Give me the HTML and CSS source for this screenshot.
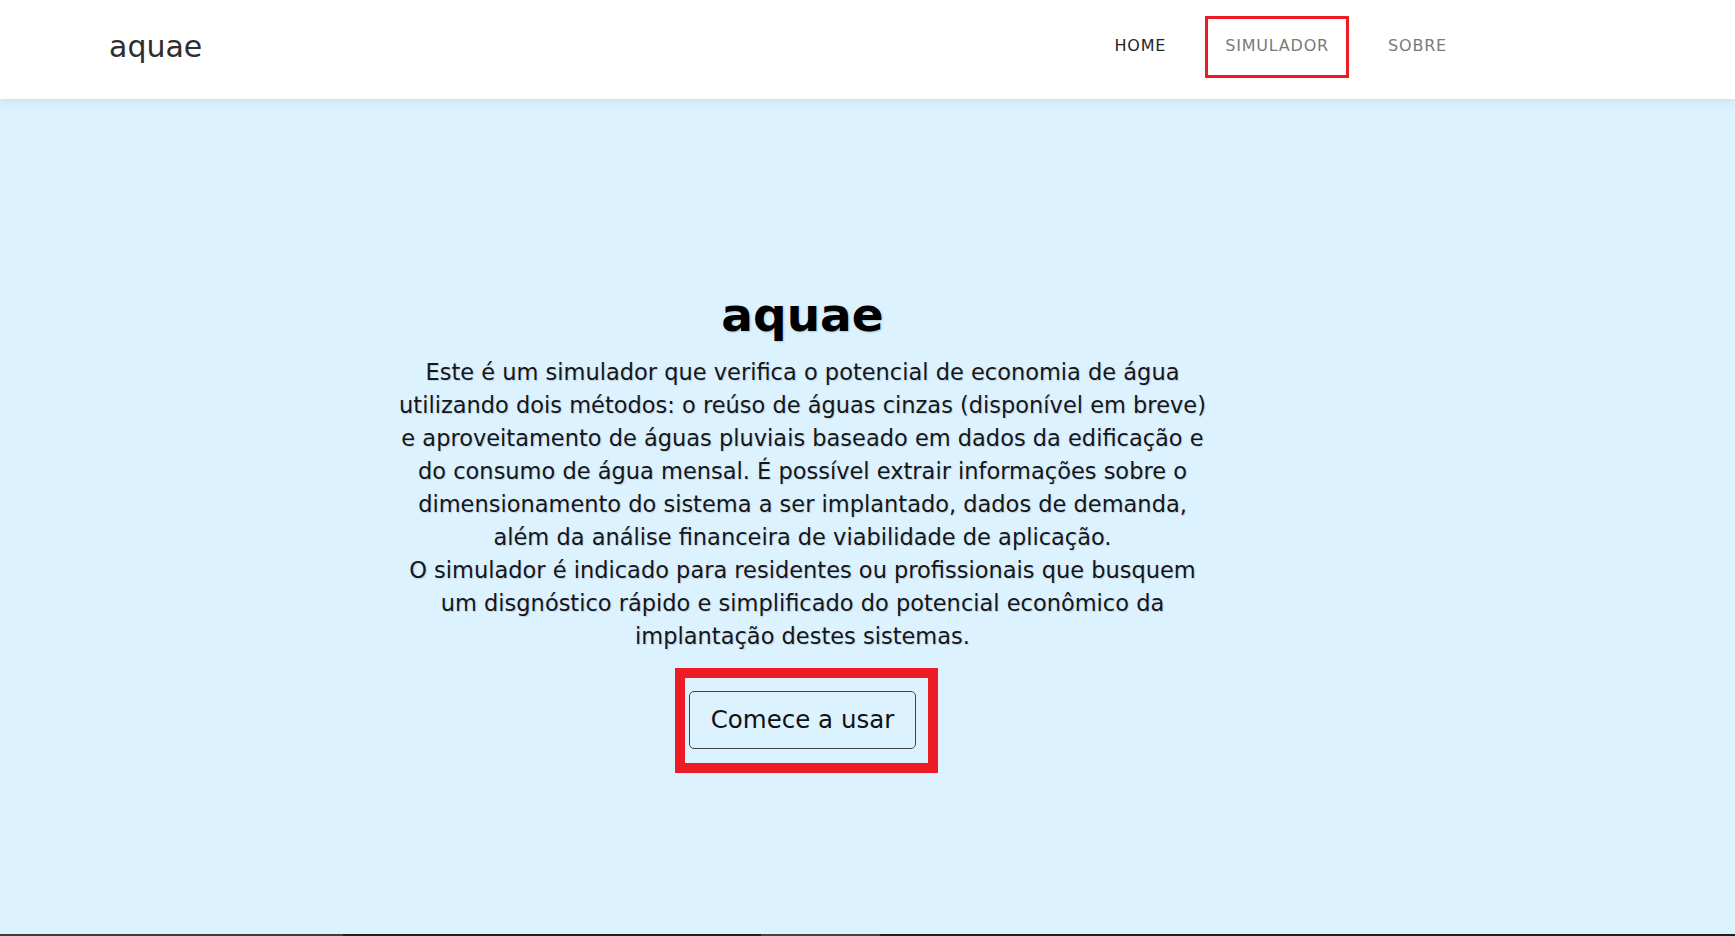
FILE: index.html
```html
<!DOCTYPE html>
<html lang="pt-BR">
<head>
<meta charset="utf-8">
<title>aquae</title>
<link rel="stylesheet" href="styles.css">
</head>
<body>
<header class="topbar">
  <a class="brand" href="#">aquae</a>
  <nav class="nav">
    <a class="nav-link nav-link-current" href="#">HOME</a>
    <a class="nav-link nav-link-marked" href="#">SIMULADOR</a>
    <a class="nav-link" href="#">SOBRE</a>
  </nav>
</header>
<main class="hero">
  <h1 class="hero-title">aquae</h1>
  <p class="hero-text">Este é um simulador que verifica o potencial de economia de água<br>utilizando dois métodos: o reúso de águas cinzas (disponível em breve)<br>e aproveitamento de águas pluviais baseado em dados da edificação e<br>do consumo de água mensal. É possível extrair informações sobre o<br>dimensionamento do sistema a ser implantado, dados de demanda,<br>além da análise financeira de viabilidade de aplicação.<br>O simulador é indicado para residentes ou profissionais que busquem<br>um disgnóstico rápido e simplificado do potencial econômico da<br>implantação destes sistemas.</p>
  <div class="cta-wrap">
    <a class="cta" href="#">Comece a usar</a>
    <span class="cta-mark"></span>
  </div>
</main>
<footer class="footer">
  <span class="footer-seg footer-seg-a"></span>
  <span class="footer-seg footer-seg-b"></span>
  <span class="footer-seg footer-seg-c"></span>
  <span class="footer-seg footer-seg-d"></span>
</footer>
</body>
</html>
```
FILE: styles.css
```css
* { box-sizing: border-box; }

html, body {
  margin: 0;
  padding: 0;
}

body {
  font-family: "DejaVu Sans", "Open Sans", sans-serif;
  background: #dcf2ff;
  color: #1a1a1a;
}

a { text-decoration: none; }

.topbar {
  position: relative;
  z-index: 2;
  height: 99px;
  background: #ffffff;
  display: flex;
  align-items: center;
  justify-content: space-between;
  padding: 0 271px 6px 109px;
  box-shadow: 0 3px 10px rgba(40, 70, 100, 0.10);
}

.brand {
  font-size: 30px;
  line-height: 36px;
  color: #2e2e2e;
  font-weight: 400;
}

.nav {
  display: flex;
  gap: 25px;
}

.nav-link {
  display: block;
  padding: 15px 17px 17px;
  line-height: 24px;
  font-size: 16px;
  letter-spacing: 0.8px;
  color: #7a7a7a;
}

.nav-link-current {
  color: #262626;
}

.nav-link-marked {
  outline: 3px solid #ed1c24;
  outline-offset: 0;
}

.hero {
  height: 835px;
  display: flex;
  flex-direction: column;
  align-items: center;
  padding: 188px 130px 0 0;
}

.hero-title {
  margin: 0;
  font-size: 47px;
  line-height: 56px;
  font-weight: 700;
  color: #000;
  text-shadow: 1px 1px 2px rgba(0, 0, 0, 0.18);
}

.hero-text {
  margin: 13px 0 0;
  font-size: 22.5px;
  line-height: 33px;
  text-align: center;
  color: #161616;
  white-space: nowrap;
  text-shadow: 1px 1px 1px rgba(40, 60, 120, 0.18);
}

.cta-wrap {
  position: relative;
  margin-top: 38px;
}

.cta {
  display: block;
  width: 227px;
  height: 58px;
  border: 1px solid #444;
  border-radius: 5px;
  font-size: 24.5px;
  line-height: 56px;
  text-align: center;
  color: #111;
}

.cta-mark {
  position: absolute;
  left: -14px;
  top: -23px;
  right: -22px;
  bottom: -24px;
  border: 10px solid #ed1c24;
  pointer-events: none;
}

.footer {
  height: 80px;
  background: #1f1f1f;
  display: flex;
  align-items: flex-start;
}

.footer-seg {
  height: 2px;
}

.footer-seg-a { width: 343px; background: #3e3e3e; }
.footer-seg-b { width: 418px; background: #1f1f1f; }
.footer-seg-c { width: 119px; background: #454545; }
.footer-seg-d { flex: 1; background: #1f1f1f; }
```
